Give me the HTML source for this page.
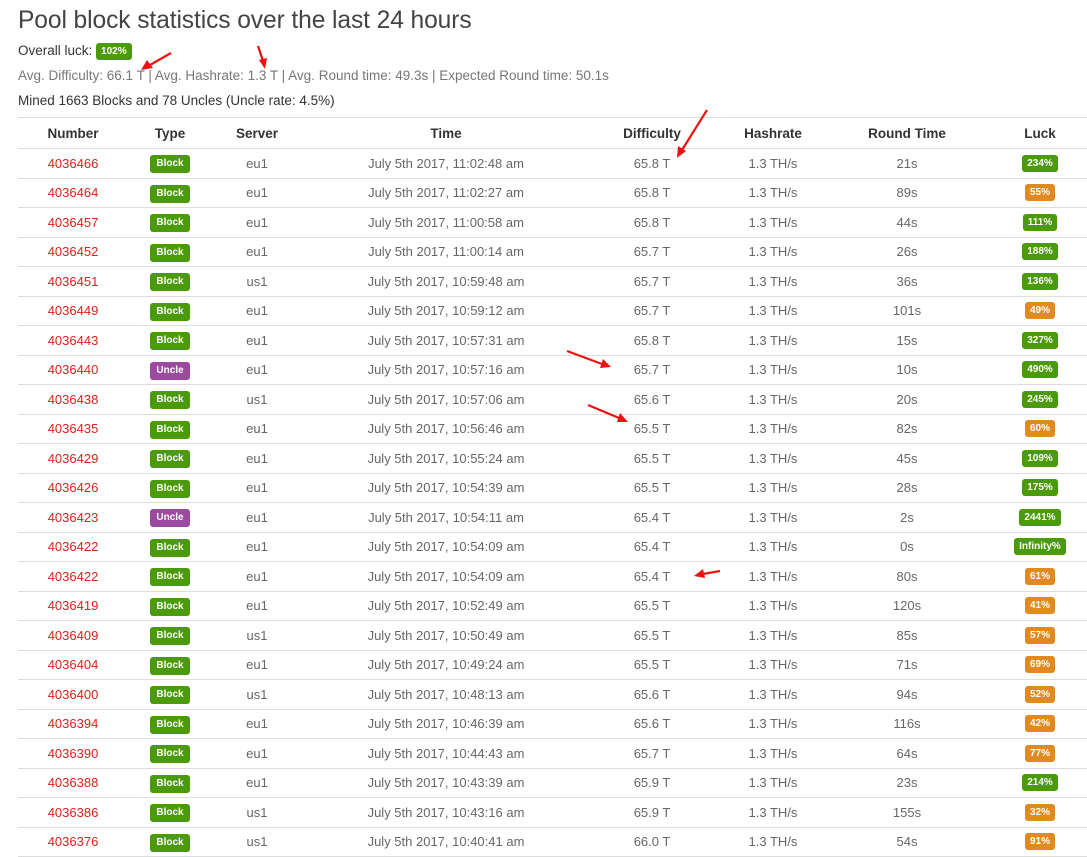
<!DOCTYPE html>
<html><head><meta charset="utf-8"><style>
html,body{margin:0;padding:0;background:#fff;width:1087px;height:854px;overflow:hidden;font-family:"Liberation Sans",sans-serif;color:#555}
h1{position:absolute;left:18px;top:7px;margin:0;font-weight:normal;font-size:24.6px;color:#444;letter-spacing:-0.1px}
.l{position:absolute;left:18px;font-size:13.5px;white-space:nowrap}
.b{display:inline-block;color:#fff;font-weight:bold;font-size:10px;border-radius:3px;padding:0 5px;line-height:17px;vertical-align:middle}
.g{background:#4a9a0a}.o{background:#e08a22}.p{background:#9b4a9f}
table{position:absolute;left:18px;top:117px;border-collapse:collapse;table-layout:fixed;width:1080px;font-size:13px}
th,td{text-align:center;border-top:1px solid #ddd;padding:0;white-space:nowrap}
th{height:30px;color:#333;font-weight:bold;font-size:13.5px}
td{height:28.5px;color:#666}
td.n{color:#d9231d}
tr:last-child td{border-bottom:1px solid #ddd}
.t .b{font-size:10px;line-height:18px;padding:0 6px;position:relative;top:1px}
</style></head><body>
<h1>Pool block statistics over the last 24 hours</h1>
<div class="l" style="top:43px;color:#333">Overall luck: <span class="b g">102%</span></div>
<div class="l" style="top:68px;color:#777">Avg. Difficulty: 66.1 T | Avg. Hashrate: 1.3 T | Avg. Round time: 49.3s | Expected Round time: 50.1s</div>
<div class="l" style="top:93px;color:#333">Mined 1663 Blocks and 78 Uncles (Uncle rate: 4.5%)</div>
<table>
<colgroup><col style="width:110px"><col style="width:84px"><col style="width:90px"><col style="width:288px"><col style="width:124px"><col style="width:118px"><col style="width:150px"><col style="width:116px"></colgroup>
<tr><th>Number</th><th>Type</th><th>Server</th><th>Time</th><th>Difficulty</th><th>Hashrate</th><th>Round Time</th><th>Luck</th></tr>
<tr><td class="n">4036466</td><td class="t"><span class="b g">Block</span></td><td>eu1</td><td>July 5th 2017, 11:02:48 am</td><td>65.8 T</td><td>1.3 TH/s</td><td>21s</td><td><span class="b g">234%</span></td></tr>
<tr><td class="n">4036464</td><td class="t"><span class="b g">Block</span></td><td>eu1</td><td>July 5th 2017, 11:02:27 am</td><td>65.8 T</td><td>1.3 TH/s</td><td>89s</td><td><span class="b o">55%</span></td></tr>
<tr><td class="n">4036457</td><td class="t"><span class="b g">Block</span></td><td>eu1</td><td>July 5th 2017, 11:00:58 am</td><td>65.8 T</td><td>1.3 TH/s</td><td>44s</td><td><span class="b g">111%</span></td></tr>
<tr><td class="n">4036452</td><td class="t"><span class="b g">Block</span></td><td>eu1</td><td>July 5th 2017, 11:00:14 am</td><td>65.7 T</td><td>1.3 TH/s</td><td>26s</td><td><span class="b g">188%</span></td></tr>
<tr><td class="n">4036451</td><td class="t"><span class="b g">Block</span></td><td>us1</td><td>July 5th 2017, 10:59:48 am</td><td>65.7 T</td><td>1.3 TH/s</td><td>36s</td><td><span class="b g">136%</span></td></tr>
<tr><td class="n">4036449</td><td class="t"><span class="b g">Block</span></td><td>eu1</td><td>July 5th 2017, 10:59:12 am</td><td>65.7 T</td><td>1.3 TH/s</td><td>101s</td><td><span class="b o">49%</span></td></tr>
<tr><td class="n">4036443</td><td class="t"><span class="b g">Block</span></td><td>eu1</td><td>July 5th 2017, 10:57:31 am</td><td>65.8 T</td><td>1.3 TH/s</td><td>15s</td><td><span class="b g">327%</span></td></tr>
<tr><td class="n">4036440</td><td class="t"><span class="b p">Uncle</span></td><td>eu1</td><td>July 5th 2017, 10:57:16 am</td><td>65.7 T</td><td>1.3 TH/s</td><td>10s</td><td><span class="b g">490%</span></td></tr>
<tr><td class="n">4036438</td><td class="t"><span class="b g">Block</span></td><td>us1</td><td>July 5th 2017, 10:57:06 am</td><td>65.6 T</td><td>1.3 TH/s</td><td>20s</td><td><span class="b g">245%</span></td></tr>
<tr><td class="n">4036435</td><td class="t"><span class="b g">Block</span></td><td>eu1</td><td>July 5th 2017, 10:56:46 am</td><td>65.5 T</td><td>1.3 TH/s</td><td>82s</td><td><span class="b o">60%</span></td></tr>
<tr><td class="n">4036429</td><td class="t"><span class="b g">Block</span></td><td>eu1</td><td>July 5th 2017, 10:55:24 am</td><td>65.5 T</td><td>1.3 TH/s</td><td>45s</td><td><span class="b g">109%</span></td></tr>
<tr><td class="n">4036426</td><td class="t"><span class="b g">Block</span></td><td>eu1</td><td>July 5th 2017, 10:54:39 am</td><td>65.5 T</td><td>1.3 TH/s</td><td>28s</td><td><span class="b g">175%</span></td></tr>
<tr><td class="n">4036423</td><td class="t"><span class="b p">Uncle</span></td><td>eu1</td><td>July 5th 2017, 10:54:11 am</td><td>65.4 T</td><td>1.3 TH/s</td><td>2s</td><td><span class="b g">2441%</span></td></tr>
<tr><td class="n">4036422</td><td class="t"><span class="b g">Block</span></td><td>eu1</td><td>July 5th 2017, 10:54:09 am</td><td>65.4 T</td><td>1.3 TH/s</td><td>0s</td><td><span class="b g">Infinity%</span></td></tr>
<tr><td class="n">4036422</td><td class="t"><span class="b g">Block</span></td><td>eu1</td><td>July 5th 2017, 10:54:09 am</td><td>65.4 T</td><td>1.3 TH/s</td><td>80s</td><td><span class="b o">61%</span></td></tr>
<tr><td class="n">4036419</td><td class="t"><span class="b g">Block</span></td><td>eu1</td><td>July 5th 2017, 10:52:49 am</td><td>65.5 T</td><td>1.3 TH/s</td><td>120s</td><td><span class="b o">41%</span></td></tr>
<tr><td class="n">4036409</td><td class="t"><span class="b g">Block</span></td><td>us1</td><td>July 5th 2017, 10:50:49 am</td><td>65.5 T</td><td>1.3 TH/s</td><td>85s</td><td><span class="b o">57%</span></td></tr>
<tr><td class="n">4036404</td><td class="t"><span class="b g">Block</span></td><td>eu1</td><td>July 5th 2017, 10:49:24 am</td><td>65.5 T</td><td>1.3 TH/s</td><td>71s</td><td><span class="b o">69%</span></td></tr>
<tr><td class="n">4036400</td><td class="t"><span class="b g">Block</span></td><td>us1</td><td>July 5th 2017, 10:48:13 am</td><td>65.6 T</td><td>1.3 TH/s</td><td>94s</td><td><span class="b o">52%</span></td></tr>
<tr><td class="n">4036394</td><td class="t"><span class="b g">Block</span></td><td>eu1</td><td>July 5th 2017, 10:46:39 am</td><td>65.6 T</td><td>1.3 TH/s</td><td>116s</td><td><span class="b o">42%</span></td></tr>
<tr><td class="n">4036390</td><td class="t"><span class="b g">Block</span></td><td>eu1</td><td>July 5th 2017, 10:44:43 am</td><td>65.7 T</td><td>1.3 TH/s</td><td>64s</td><td><span class="b o">77%</span></td></tr>
<tr><td class="n">4036388</td><td class="t"><span class="b g">Block</span></td><td>eu1</td><td>July 5th 2017, 10:43:39 am</td><td>65.9 T</td><td>1.3 TH/s</td><td>23s</td><td><span class="b g">214%</span></td></tr>
<tr><td class="n">4036386</td><td class="t"><span class="b g">Block</span></td><td>us1</td><td>July 5th 2017, 10:43:16 am</td><td>65.9 T</td><td>1.3 TH/s</td><td>155s</td><td><span class="b o">32%</span></td></tr>
<tr><td class="n">4036376</td><td class="t"><span class="b g">Block</span></td><td>us1</td><td>July 5th 2017, 10:40:41 am</td><td>66.0 T</td><td>1.3 TH/s</td><td>54s</td><td><span class="b o">91%</span></td></tr>
</table>
<svg width="1087" height="854" style="position:absolute;left:0;top:0" fill="#ee1111" stroke="#ee1111" stroke-width="2.2">
<line x1="171" y1="53" x2="150" y2="65"/><polygon stroke="none" points="141,70 147,60 153,68"/>
<line x1="258" y1="46" x2="263" y2="61"/><polygon stroke="none" points="265,69 259,60 267,58"/>
<line x1="707" y1="110" x2="682" y2="150"/><polygon stroke="none" points="677,158 678,146 686,151"/>
<line x1="567" y1="351" x2="602" y2="364"/><polygon stroke="none" points="611,367 600,368 603,359"/>
<line x1="588" y1="405" x2="619" y2="418"/><polygon stroke="none" points="628,422 617,422 620,413"/>
<line x1="720" y1="571" x2="703" y2="574"/><polygon stroke="none" points="694,576 703,569 705,578"/>
</svg>
</body></html>
